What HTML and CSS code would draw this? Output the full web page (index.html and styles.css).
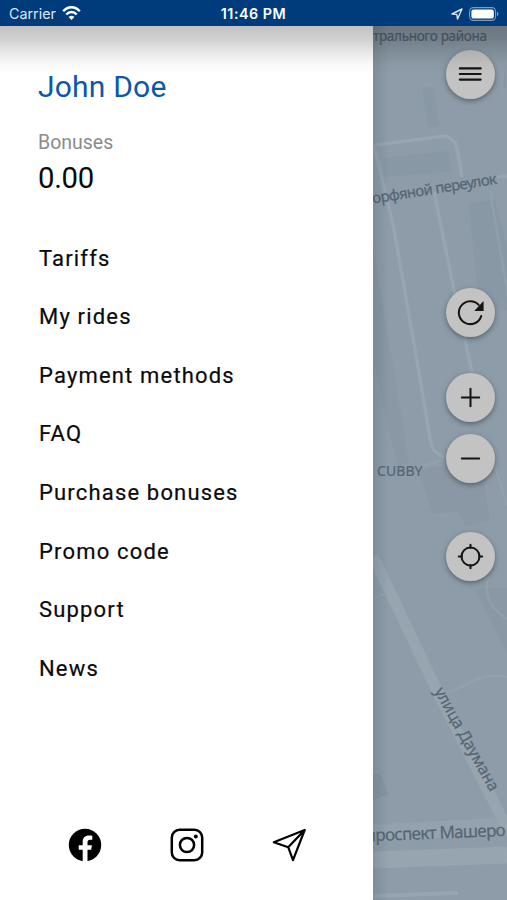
FILE: index.html
```html
<!DOCTYPE html>
<html lang="en">
<head>
<meta charset="utf-8">
<title>Menu</title>
<link rel="stylesheet" href="styles.css">
</head>
<body>
<header class="status">
  <div class="carrier">Carrier
    <svg width="19" height="15" viewBox="0 0 19 15" fill="none" stroke="#fff" stroke-width="2.4"><path d="M1.2 5.3C6-.1 13-.1 17.8 5.3M4.3 8.5c3-3.4 7.4-3.4 10.4 0"/><path d="M6.6 11.1c1.7-1.8 4.1-1.8 5.8 0L9.5 14z" fill="#fff" stroke="none"/></svg>
  </div>
  <div class="time">11:46 PM</div>
  <div class="indicators">
    <svg width="12" height="12" viewBox="0 0 12 12" fill="none" stroke="#dbe6f2" stroke-width="1.4" stroke-linejoin="round"><path d="M1 6 11 1 6.5 11 5.8 6.4z"/></svg>
    <svg width="31" height="14" viewBox="0 0 31 14"><rect x=".6" y=".6" width="26" height="12.8" rx="3.8" fill="none" stroke="#7e9cbd" stroke-width="1.1"/><rect x="2.4" y="2.4" width="22.4" height="9.2" rx="2.2" fill="#fff"/><path d="M28 4.8q3 2.2 0 4.4z" fill="#7e9cbd"/></svg>
  </div>
</header>
<main class="screen">
  <aside class="drawer">
    <h1 class="name">John Doe</h1>
    <div class="label">Bonuses</div>
    <div class="balance">0.00</div>
    <nav class="menu">
      <a>Tariffs</a><a>My rides</a><a>Payment methods</a><a>FAQ</a><a>Purchase bonuses</a><a>Promo code</a><a>Support</a><a>News</a>
    </nav>
    <footer class="social">
      <svg width="34" height="34" viewBox="0 0 34 34"><circle cx="17" cy="17" r="16.2"/><path d="M14.7 34V21.7h-4v-4.5h4v-3.4c0-4.2 2.5-6.3 6.1-6.3 1.4 0 2.6.1 3.5.3v3.9h-2.1c-2 0-2.7 1-2.7 2.6v2.9h4.4l-.7 4.5h-3.7V34z" fill="#fff"/></svg>
      <svg width="34" height="34" viewBox="0 0 34 34" fill="none" stroke="#000" stroke-width="2.5"><rect x="1.8" y="1.8" width="30.4" height="30.4" rx="7.8"/><circle cx="17" cy="17" r="7.1"/><circle cx="25.8" cy="8.4" r="2" fill="#000" stroke="none"/></svg>
      <svg width="34" height="34" viewBox="0 0 34 34" fill="none" stroke="#000" stroke-width="2.2" stroke-linejoin="round"><path d="M1.8 14.2 32.7 2 21 32.2 16.2 19.2zM16.2 19.2 32.7 2"/></svg>
    </footer>
  </aside>
  <section class="map">
    <svg class="tiles" width="134" height="875" viewBox="373 25 134 875">
      <g fill="#84939f">
        <path d="M422 88q6-4 11 0l6 36-11 2zM383 157l66-7 2 20-67 6zM469 203l26-5 15 60v52l-31-8z" opacity=".5"/>
        <path d="M373 245l36 217-12 2-24-105zM419 470l34-8 8 8-4 12 26-5 7 42-25 6-7-15-25 3zM475 588l32 64v-65z" opacity=".35"/>
        <path d="M373 773l7-1 8 21-15 6zM506 65v24l-3-5z" opacity=".8"/>
      </g>
      <g fill="none" stroke="#98a7b2">
        <path d="M375 144l70-9q12 3 13 17l4 24M374 144l20 84 23 132 14 83q3 10 13 13M434 191l20 98 18 82M497 176l10-1" stroke-width="3.5" opacity=".85"/>
        <path d="M490 190l19 110M493 459l14 45M373 597l16-6M447 691c21-5 30-20 60-15M489 575q-9 25 18 43M420 466l23-7" stroke-width="2.5" opacity=".5"/>
        <path d="M373 556l20 41 47 99 67 131" stroke-width="11" opacity=".85"/>
        <path d="M373 832l134-7" stroke-width="17" opacity=".6"/>
        <path d="M373 859l134-5" stroke-width="17" opacity=".8"/>
        <path d="M373 895l85-3" stroke-width="4" opacity=".8"/>
      </g>
      <g class="street">
        <text x="373" y="40" font-size="13.500" textLength="114">трального района</text>
        <text x="373" y="202.500" font-size="15" textLength="126" transform="rotate(-9 373 202.500)">орфяной переулок</text>
        <text x="377" y="475" font-size="14" textLength="45.500">CUBBY</text>
        <text x="434" y="690" font-size="16" textLength="116" transform="rotate(61 434 690)">улица Даумана</text>
        <text x="366" y="840.500" font-size="17" textLength="140" transform="rotate(-2.300 366 840.500)">проспект Машеро</text>
      </g>
    </svg>
    <div class="controls">
      <button class="round" aria-label="Menu"><svg viewBox="0 0 48 48"><path d="M13.500 18h20.500M13.500 23.500h20.500M13.500 29h20.500"/></svg></button>
      <button class="round refresh" aria-label="Refresh"><svg viewBox="0 0 48 48"><path d="M34.500 27.500A11.200 11.200 0 1 1 32 16.500"/><path d="M36.300 14v8h-7.500z" fill="#151515" stroke-width="1"/></svg></button>
      <button class="round plus" aria-label="Zoom in"><svg viewBox="0 0 48 48"><path d="M15.500 24h17M24 15.500v17"/></svg></button>
      <button class="round minus" aria-label="Zoom out"><svg viewBox="0 0 48 48"><path d="M15.500 24h17"/></svg></button>
      <button class="round locate" aria-label="Locate"><svg viewBox="0 0 48 48"><circle cx="24" cy="24" r="8.800"/><path d="M24 12.500v3M24 32.500v3M12.500 24h3M32.500 24h3"/></svg></button>
    </div>
  </section>
</main>
</body>
</html>
```
FILE: styles.css
```css
* { box-sizing: border-box; }
body { margin: 0; width: 507px; height: 900px; overflow: hidden; display: flex; flex-direction: column; font-family: Roboto, sans-serif; color: #0a0a0a; }
svg { display: block; }
.status { height: 25.5px; flex: none; background: #003c7b; color: #fff; display: grid; grid-template-columns: 1fr auto 1fr; align-items: center; padding: 2px 7px 0 9px; font: 14.3px/22px Inter, sans-serif; }
.carrier { display: flex; align-items: center; gap: 6px; color: #dbe6f2; letter-spacing: 0; }
.time { font-weight: 600; font-size: 14.3px; letter-spacing: .5px; margin-left: -2px; }
.indicators { display: flex; justify-content: flex-end; align-items: center; gap: 6px; }
.screen { flex: 1; display: flex; min-height: 0; position: relative; }
.screen::after { content: ""; position: absolute; inset: 0 0 auto; height: 48px; pointer-events: none; background: linear-gradient(rgba(0,0,0,.24), rgba(0,0,0,.19) 27%, rgba(0,0,0,.09) 55%, rgba(0,0,0,.025) 80%, transparent); }
.drawer { width: 372.5px; flex: none; background: #fff; padding: 43px 38px 0; display: flex; flex-direction: column; }
.name { margin: 0; font-size: 30px; line-height: 36px; font-weight: 400; color: #0d57a8; letter-spacing: .2px; }
.label { margin-top: 26px; font-size: 19.5px; line-height: 24px; color: #8b8b8b; }
.balance { margin-top: 5px; font-size: 29.3px; line-height: 36px; letter-spacing: -.3px; }
.menu { margin: 34px 0 0 1px; display: flex; flex-direction: column; }
.menu a { height: 58.65px; line-height: 58.65px; font-size: 22px; letter-spacing: 1.17px; white-space: nowrap; -webkit-text-stroke: .2px #0a0a0a; }
.social { margin: auto 29px 38px 30px; display: flex; justify-content: space-between; }
.map { flex: 1; position: relative; background: #8d9ca8; overflow: hidden; }
.map::before { content: ""; position: absolute; inset: 0 auto 0 0; width: 16px; background: linear-gradient(90deg, rgba(60,75,88,.18), transparent); }
.street { fill: #566573; stroke: #566573; stroke-width: .2px; font-family: "Noto Sans", sans-serif; }
.controls { position: absolute; inset: 0 12px 0 auto; padding-top: 24px; display: flex; flex-direction: column; }
.round { width: 49px; height: 49px; padding: 0; border: 0; border-radius: 50%; background: #c3c3c3; box-shadow: 0 2px 5px rgba(35,45,55,.5); }
.round svg { width: 49px; height: 49px; fill: none; stroke: #151515; stroke-width: 2; stroke-linecap: round; }
.refresh { margin-top: 189px; }
.plus { margin-top: 36.5px; }
.minus { margin-top: 12px; }
.locate { margin-top: 48.5px; }
```
